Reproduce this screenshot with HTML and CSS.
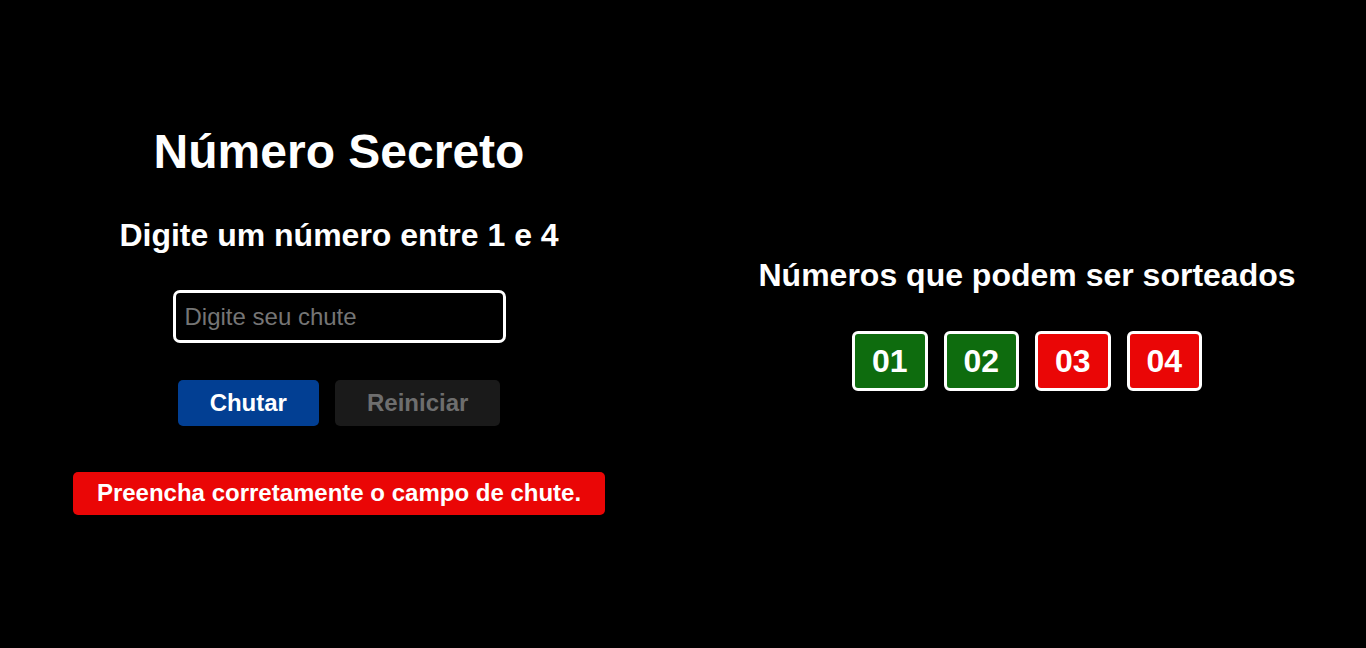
FILE: index.html
```html
<!DOCTYPE html>
<html lang="pt-BR">
<head>
<meta charset="utf-8">
<title>Número Secreto</title>
<link rel="stylesheet" href="styles.css">
</head>
<body>
<main class="page">
  <section class="game">
    <h1 class="title">Número Secreto</h1>
    <h2 class="subtitle">Digite um número entre 1 e 4</h2>
    <input class="guess" type="text" placeholder="Digite seu chute">
    <div class="actions">
      <button class="btn btn-primary">Chutar</button>
      <button class="btn btn-disabled">Reiniciar</button>
    </div>
    <p class="message">Preencha corretamente o campo de chute.</p>
  </section>
  <section class="numbers">
    <h2 class="subtitle">Números que podem ser sorteados</h2>
    <div class="chips">
      <span class="chip chip-ok">01</span>
      <span class="chip chip-ok">02</span>
      <span class="chip chip-bad">03</span>
      <span class="chip chip-bad">04</span>
    </div>
  </section>
</main>
</body>
</html>
```

FILE: styles.css
```css
* { box-sizing: border-box; }
html, body { margin: 0; padding: 0; background: #000; }
body {
  font-family: "Liberation Sans", Arial, sans-serif;
  color: #fff;
}
.page {
  display: flex;
  gap: 10px;
  height: 648px;
  align-items: center;
}
.game, .numbers {
  flex: 1;
  display: flex;
  flex-direction: column;
  align-items: center;
}
.game { padding-bottom: 10px; }
.title {
  margin: 1px 0 0;
  font-size: 48px;
  line-height: 55px;
  font-weight: bold;
}
.subtitle {
  margin: 0;
  font-size: 32px;
  line-height: 37px;
  font-weight: bold;
}
.game .subtitle { margin-top: 38px; }
.guess {
  margin-top: 36px;
  width: 333px;
  height: 53px;
  background: #000;
  border: 3px solid #fff;
  border-radius: 7px;
  padding: 0 9px;
  font-family: "Liberation Sans", Arial, sans-serif;
  font-size: 24px;
  color: #fff;
  outline: none;
}
.guess::placeholder { color: #757575; }
.actions {
  margin-top: 37px;
  display: flex;
  gap: 16px;
}
.btn {
  border: none;
  border-radius: 5px;
  padding: 9px 32px;
  height: 46px;
  font-family: "Liberation Sans", Arial, sans-serif;
  font-size: 24px;
  font-weight: bold;
  line-height: 28px;
}
.btn-primary { background: #023f93; color: #fff; }
.btn-disabled { background: #1a1a1a; color: #6e6e6e; }
.message {
  margin: 46px 0 0;
  background: #ea0606;
  color: #fff;
  border-radius: 5px;
  padding: 7px 24px 8px;
  font-size: 24px;
  font-weight: bold;
  line-height: 28px;
}
.chips {
  margin-top: 37px;
  display: flex;
  gap: 16px;
}
.chip {
  display: block;
  border: 3px solid #fff;
  border-radius: 6px;
  padding: 8px 0;
  width: 75.5px;
  text-align: center;
  font-size: 32px;
  font-weight: bold;
  line-height: 38px;
}
.chip-ok { background: #0e6c0e; }
.chip-bad { background: #ea0606; }
```
